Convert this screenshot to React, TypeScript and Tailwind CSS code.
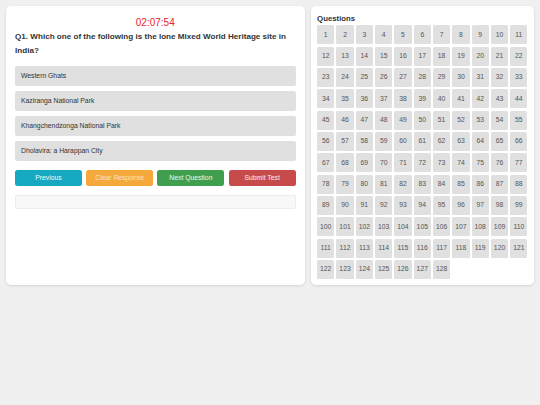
import React from "react";

const options = [
  "Western Ghats",
  "Kaziranga National Park",
  "Khangchendzonga National Park",
  "Dholavira: a Harappan City",
];

export default function App() {
  const nums = Array.from({ length: 128 }, (_, i) => i + 1);
  return (
    <div
      className="w-[540px] h-[405px] bg-[#f0f0f0] p-[6px] flex items-start gap-[6px]"
      style={{ fontFamily: '"Liberation Sans", Arial, sans-serif' }}
    >
      <div className="flex items-stretch gap-[6px] w-full">
        <div className="flex-[4] bg-white rounded-[5px] shadow-[0_1px_3px_rgba(0,0,0,0.12)] px-[9px] pt-[10px] pb-[9px]">
          <div className="text-center text-[10px] leading-[14px] text-[#e8262b]">02:07:54</div>
          <div className="text-[8.1px] leading-[13.5px] font-bold text-[#333]">
            Q1. Which one of the following is the lone Mixed World Heritage site in India?
          </div>
          <div className="mt-[8.7px] flex flex-col gap-[4.6px]">
            {options.map((o) => (
              <div
                key={o}
                className="h-[20.5px] bg-[#e0e0e0] rounded-[2px] flex items-center pl-[6px] text-[6.8px] text-[#333]"
              >
                {o}
              </div>
            ))}
          </div>
          <div className="mt-[9px] grid grid-cols-4 gap-[4.4px]">
            <button className="h-[16px] rounded-[2.5px] bg-[#17a9c1] text-[#eefafc] text-[6.8px] font-normal">Previous</button>
            <button className="h-[16px] rounded-[2.5px] bg-[#f5a83c] text-[#fbe4c4] text-[6.8px] font-normal">Clear Response</button>
            <button className="h-[16px] rounded-[2.5px] bg-[#3f9f4f] text-[#eef8f0] text-[6.8px] font-normal">Next Question</button>
            <button className="h-[16px] rounded-[2.5px] bg-[#c84b4c] text-[#fbeeee] text-[6.8px] font-normal">Submit Test</button>
          </div>
          <div className="mt-[8.7px] h-[13.7px] bg-[#f8f8f8] border border-[#ececec] rounded-[2px]"></div>
        </div>
        <div className="flex-[3] bg-white rounded-[5px] shadow-[0_1px_3px_rgba(0,0,0,0.12)] px-[6.5px] pt-[6.5px] pb-[5.5px]">
          <div className="text-[7.8px] leading-[12px] font-bold text-[#333] mb-[0.8px]">Questions</div>
          <div className="grid grid-cols-11 gap-x-[2px] gap-y-[2.35px]">
            {nums.map((n) => (
              <div
                key={n}
                className="h-[19px] bg-[#e0e0e0] rounded-[1.5px] flex items-center justify-center text-[6.8px] text-[#555]"
              >
                {n}
              </div>
            ))}
          </div>
        </div>
      </div>
    </div>
  );
}
